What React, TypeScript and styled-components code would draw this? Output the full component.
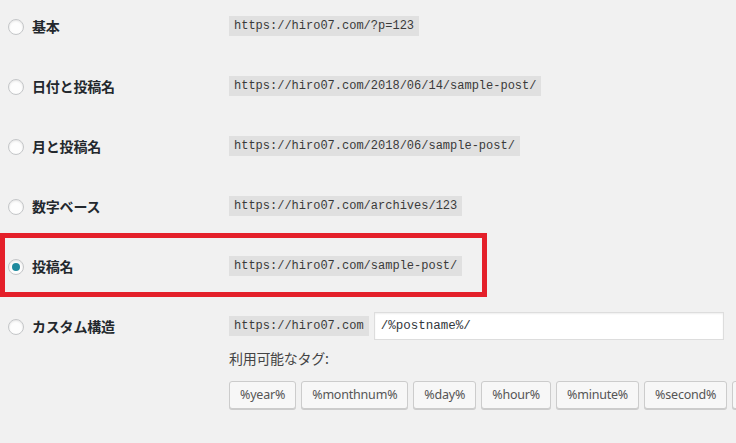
import React from "react";
import styled, { createGlobalStyle } from "styled-components";

const GlobalStyle = createGlobalStyle`
  html, body { margin: 0; padding: 0; background: #f1f1f1; }
  body {
    font-family: "Noto Sans CJK JP", "Noto Sans", sans-serif;
    color: #23282d;
    overflow: hidden;
  }
`;

const Page = styled.div`
  width: 736px;
  height: 443px;
  overflow: hidden;
`;

const Row = styled.div<{ $custom?: boolean }>`
  position: relative;
  display: grid;
  grid-template-columns: 221px 1fr;
  padding: ${(p) => (p.$custom ? "12px 0 0 8px" : "16px 0 24px 8px")};
  box-sizing: border-box;
  height: ${(p) => (p.$custom ? "auto" : "60px")};
`;

const LabelCell = styled.label<{ $tall?: boolean }>`
  display: flex;
  align-items: center;
  height: ${(p) => (p.$tall ? "28px" : "20px")};
  gap: 8px;
`;

const Radio = styled.span<{ $checked?: boolean }>`
  position: relative;
  width: 16px;
  height: 16px;
  box-sizing: border-box;
  border-radius: 50%;
  border: 1px solid #c4c6c8;
  background: #fdfdfd;
  box-shadow: inset 0 1px 2px rgba(0, 0, 0, 0.1);
  margin-top: ${(p) => (p.$checked ? "1px" : "2px")};
  flex: none;
  &::after {
    content: "";
    display: ${(p) => (p.$checked ? "block" : "none")};
    position: absolute;
    left: 3px;
    top: 3px;
    width: 8px;
    height: 8px;
    border-radius: 50%;
    background: #1e8a9e;
  }
`;

const LabelText = styled.span`
  font-size: 14px;
  font-weight: 700;
  line-height: 20px;
  color: #23282d;
  letter-spacing: -0.2px;
`;

const ValueCell = styled.div`
  display: flex;
  flex-direction: column;
  align-items: flex-start;
`;

const Code = styled.code`
  display: inline-block;
  font-family: "Liberation Mono", "DejaVu Sans Mono", monospace;
  font-size: 12px;
  line-height: 14px;
  padding: 3px 5px;
  background: rgba(0, 0, 0, 0.07);
  color: #3a3a3a;
`;

const InputLine = styled.div`
  display: flex;
  align-items: center;
  gap: 5px;
`;

const TextInput = styled.div`
  width: 350px;
  height: 28px;
  box-sizing: border-box;
  background: #fff;
  border: 1px solid #ddd;
  box-shadow: inset 0 1px 2px rgba(0, 0, 0, 0.07);
  font-family: "Liberation Mono", "DejaVu Sans Mono", monospace;
  font-size: 12.5px;
  line-height: 26px;
  padding: 0 6px;
  color: #32373c;
`;

const TagsLabel = styled.div`
  margin-top: 8px;
  font-size: 14px;
  line-height: 20px;
  color: #444;
  letter-spacing: -0.3px;
`;

const Tags = styled.div`
  margin-top: 13px;
  display: flex;
  gap: 5px;
  white-space: nowrap;
`;

const TagButton = styled.button`
  flex: none;
  margin: 0;
  height: 28px;
  box-sizing: border-box;
  padding: 0 10px;
  border: 1px solid #ccc;
  border-radius: 3px;
  background: #f7f7f7;
  box-shadow: 0 1px 0 #ccc;
  font-family: "Noto Sans", "Noto Sans CJK JP", sans-serif;
  font-size: 12.5px;
  letter-spacing: -0.2px;
  color: #555;
  line-height: 26px;
`;

const Highlight = styled.div`
  position: absolute;
  left: 0;
  top: -7px;
  width: 487px;
  height: 64px;
  box-sizing: border-box;
  border: 5px solid #e4202a;
  pointer-events: none;
`;

const rows = [
  { label: "基本", url: "https://hiro07.com/?p=123" },
  { label: "日付と投稿名", url: "https://hiro07.com/2018/06/14/sample-post/" },
  { label: "月と投稿名", url: "https://hiro07.com/2018/06/sample-post/" },
  { label: "数字ベース", url: "https://hiro07.com/archives/123" },
  { label: "投稿名", url: "https://hiro07.com/sample-post/", checked: true },
];

const tags = ["%year%", "%monthnum%", "%day%", "%hour%", "%minute%", "%second%", "%post_id%"];

export default function App() {
  return (
    <Page>
      <GlobalStyle />
      {rows.map((r) => (
        <Row key={r.label}>
          <LabelCell>
            <Radio $checked={r.checked} />
            <LabelText>{r.label}</LabelText>
          </LabelCell>
          <ValueCell>
            <Code>{r.url}</Code>
          </ValueCell>
          {r.checked && <Highlight />}
        </Row>
      ))}
      <Row $custom>
        <LabelCell $tall>
          <Radio />
          <LabelText>カスタム構造</LabelText>
        </LabelCell>
        <ValueCell>
          <InputLine>
            <Code>https://hiro07.com</Code>
            <TextInput>/%postname%/</TextInput>
          </InputLine>
          <TagsLabel>利用可能なタグ:</TagsLabel>
          <Tags>
            {tags.map((t) => (
              <TagButton key={t}>{t}</TagButton>
            ))}
          </Tags>
        </ValueCell>
      </Row>
    </Page>
  );
}
